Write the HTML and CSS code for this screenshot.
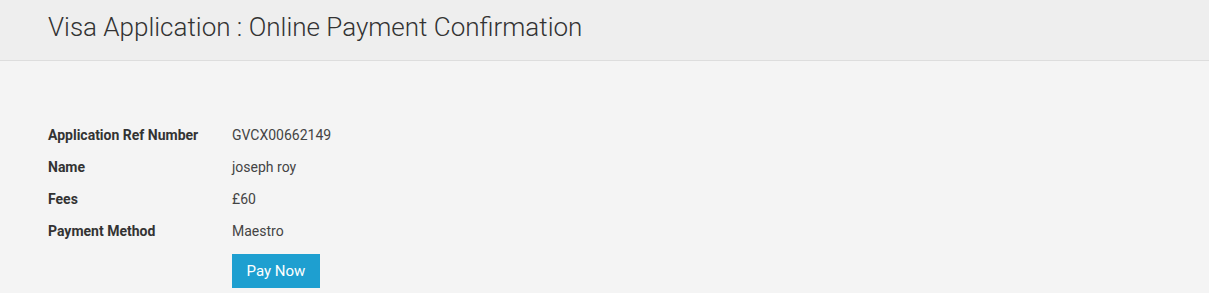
FILE: index.html
```html
<!DOCTYPE html>
<html lang="en">
<head>
  <meta charset="UTF-8" />
  <title>Visa Application - Online Payment Confirmation</title>
  <link rel="stylesheet" href="styles.css">
</head>
<body>

  <div class="page-header">
    <h1>Visa Application : Online Payment Confirmation</h1>
  </div>

  <div class="content">
    <div class="details">
      <div class="row">
        <div class="label">Application Ref Number</div>
        <div class="value">GVCX00662149</div>
      </div>
      <div class="row">
        <div class="label">Name</div>
        <div class="value">joseph roy</div>
      </div>
      <div class="row">
        <div class="label">Fees</div>
        <div class="value">&pound;60</div>
      </div>
      <div class="row">
        <div class="label">Payment Method</div>
        <div class="value">Maestro</div>
      </div>
      <div class="row">
        <div class="label"></div>
        <div class="value"><button class="pay-button">Pay Now</button></div>
      </div>
    </div>
  </div>

</body>
</html>
```

FILE: styles.css
```css
body {
  margin: 0;
  font-family: Roboto, "Liberation Sans", Arial, sans-serif;
  background: #f4f4f4;
  color: #333;
}

.page-header {
  background: #eeeeee;
  border-bottom: 1px solid #dddddd;
  height: 61px;
  padding: 0 48px;
  box-sizing: border-box;
  display: flex;
  align-items: center;
}

.page-header h1 {
  margin: 0 0 7px 0;
  font-size: 26px;
  font-weight: 300;
  color: #333;
}

.content {
  padding: 58px 48px 0;
}

.details {
  display: flex;
  flex-direction: column;
}

.row {
  display: flex;
  align-items: center;
  min-height: 32px;
  font-size: 14px;
}

.label {
  width: 184px;
  font-weight: 700;
  color: #333;
}

.value {
  color: #444;
}

.pay-button {
  margin-top: 7px;
  background-color: #1e9fd0;
  color: #fff;
  border: none;
  font-family: inherit;
  font-size: 15px;
  width: 88px;
  height: 34px;
  padding: 0;
  cursor: pointer;
}
```
